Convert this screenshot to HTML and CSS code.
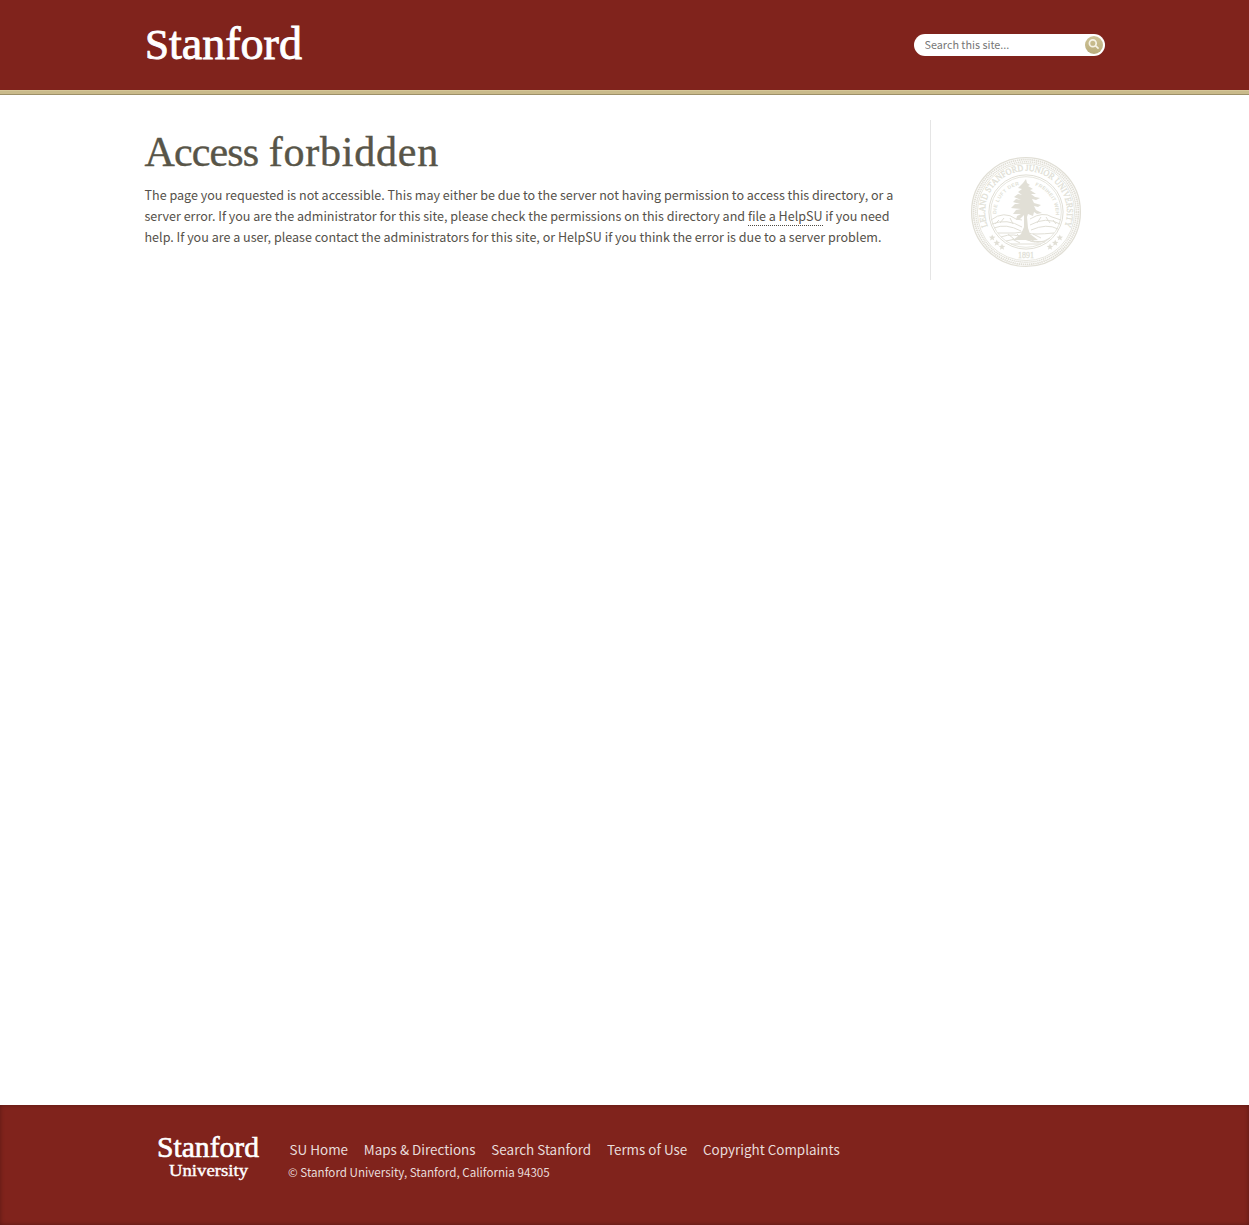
FILE: index.html
```html
<!DOCTYPE html>
<html lang="en">
<head>
<meta charset="utf-8">
<title>Access forbidden</title>
<link rel="stylesheet" href="styles.css">
</head>
<body>
<header class="header">
  <div class="container header-row">
    <svg class="logo" width="160" height="60" viewBox="0 0 160 60" role="img" aria-label="Stanford"><text x="0" y="49" textLength="157" lengthAdjust="spacingAndGlyphs"><tspan class="cap">S</tspan>tanford</text></svg>
    <form class="search">
      <input type="text" placeholder="Search this site..." aria-label="Search this site">
      <button type="button" aria-label="Search"><svg width="18" height="18" viewBox="0 0 18 18"><circle cx="7.8" cy="7.2" r="3.4"/><path d="M10.4 9.7 13.6 12.6"/></svg></button>
    </form>
  </div>
</header>
<main class="container main">
  <section class="content">
    <h1><span class="tight">Access</span> <span class="loose">forbidden</span></h1>
    <p>The page you requested is not accessible. This may either be due to the server not having permission to access this directory, or a<br>server error. If you are the administrator for this site, please check the permissions on this directory and <a href="#">file a HelpSU</a> if you need<br>help. If you are a user, please contact the administrators for this site, or HelpSU if you think the error is due to a server problem.</p>
  </section>
  <aside class="side">
    <svg class="seal" width="112" height="112" viewBox="-56 -56 112 112">
      <defs>
        <path id="outer" d="M-38.3 14.5A41 41 0 1 1 38.3 14.5"/>
        <path id="inner" d="M-29.8 2A29.8 29.8 0 1 1 29.8 2"/>
        <g id="stars"><path id="star" d="M-33.8 22.4l.9 2.2 2.4.1-1.9 1.5.7 2.3-2.1-1.3-2.1 1.3.7-2.3-1.9-1.5 2.4-.1z"/><use href="#star" x="4.6" y="5.2"/><use href="#star" x="9.8" y="9.2"/></g>
      </defs>
      <g class="rings">
        <circle r="54.4" stroke-width="1.3"/>
        <circle r="52.4" stroke-width="1.8" stroke-dasharray="1.5 .6"/>
        <circle r="50.2" stroke-width="1.4" stroke-dasharray="1.4 .6"/>
        <circle r="48.6" stroke-width=".8"/>
        <circle r="37.1" stroke-width="1"/>
        <circle r="35.3" stroke-width=".8"/>
      </g>
      <text class="seal-name"><textPath href="#outer" textLength="158" lengthAdjust="spacingAndGlyphs">LELAND STANFORD JUNIOR UNIVERSITY</textPath></text>
      <text class="seal-motto"><textPath href="#inner" textLength="40">DIE LUFT DER</textPath></text>
      <text class="seal-motto"><textPath href="#inner" startOffset="56" textLength="42">FREIHEIT WEHT</textPath></text>
      <use href="#stars"/><use href="#stars" transform="scale(-1 1)"/>
      <text class="seal-year" x="-8" y="45.8" textLength="16" lengthAdjust="spacingAndGlyphs">1891</text>
      <path class="tree" d="M0-33l1 4 3 2-2 1 5 3-3 1 6 4-5 0 4 3 5 1-4 2-4-1 2 4 7 2-3 2-4-1 2 4 6 3-5 1-3-2-1 4-5-2-1 3 1 11 2 6 8 6H-13l8-6 3-7 0-12-4 4-4 1 1-4 4-2-8 0 3-4 5-1-10-1 4-4 5 0-7-2 3-3 5 1-7-3 4-3 4 1-4-3 4-3-4-1 5-5z"/>
      <g class="land">
        <path d="M-35 8Q-22-2-10 7L-4 8M4 7Q17-1 26 5L35 8M-34 12Q-19 6-4 15M4 13Q20 4 34 12M-32 16Q-20 11-5 19M5 18Q21 11 32 17M-28 21H-11Q-3 19 2 21T28 21M-25 25Q-12 20 0 27T24 26M-20 29Q-5 25 5 29L19 30M-15 32H15"/>
        <path d="M-27 8l-4 4M-22 6l-4 5M-16 6l3 6M15 5l-4 6M20 5l4 6M27 8l3 4M-18 22l6 5M-9 22l5 5M7 22l8 4M0 24l9 6M-14 27l8 4"/>
      </g>
    </svg>
  </aside>
</main>
<footer class="footer">
  <div class="container footer-row">
    <svg class="footer-logo" width="108" height="56" viewBox="0 0 108 56" role="img" aria-label="Stanford University"><text class="f1" x="0" y="28" textLength="102" lengthAdjust="spacingAndGlyphs">Stanford</text><text class="f2" x="12" y="47" textLength="79" lengthAdjust="spacingAndGlyphs">University</text></svg>
    <div class="footer-text">
      <nav><a href="#">SU Home</a><a href="#">Maps &amp; Directions</a><a href="#">Search Stanford</a><a href="#">Terms of Use</a><a href="#">Copyright Complaints</a></nav>
      <small>© Stanford University, Stanford, California 94305</small>
    </div>
  </div>
</footer>
</body>
</html>
```
FILE: styles.css
```css
* { box-sizing: border-box; }
body { margin: 0; min-height: 1225px; display: flex; flex-direction: column; background: #fff; color: #55514a; font-family: "Noto Sans CJK SC", "Noto Sans", sans-serif; font-size: 12.55px; }
.container { width: 960px; margin: 0 auto; }
.header { height: 95px; background: linear-gradient(#80231c 90px, #d5c698 90px, #d5c698 91px, #c9ba8b 91px, #c9ba8b 94px, #9c9068 94px); }
.header-row { display: flex; justify-content: space-between; height: 90px; }
.logo { margin-top: 10px; }
.logo text { font: 46px "Liberation Serif", serif; fill: #fff; stroke: #fff; stroke-width: .9; }
.logo .cap { font-size: 43px; }
.search { display: flex; align-items: center; width: 191px; height: 22px; margin-top: 34px; padding: 0 2px 0 11px; border-radius: 11px; background: #fff; }
.search input { flex: 1; min-width: 0; height: 20px; padding: 0 0 2px; border: 0; outline: 0; background: none; font: 10.8px "Noto Sans CJK SC", sans-serif; color: #777; }
.search input::placeholder { color: #777; opacity: 1; }
.search button { width: 18px; height: 18px; padding: 0; border: 0; background: none; }
.search svg { display: block; border-radius: 9px; background: linear-gradient(#cfc498, #b9ac7b); fill: none; stroke: #f6f3e6; stroke-width: 1.7; }
.main { flex: 1; display: flex; align-items: flex-start; padding-top: 25px; }
.content { width: 786px; height: 160px; padding-top: 8px; border-right: 1px solid #e5e5e5; }
h1 { margin: 0; font: 400 42px/48px "Liberation Serif", serif; color: #585548; white-space: nowrap; -webkit-text-stroke: .4px #585548; }
.tight { letter-spacing: -.85px; }
.loose { letter-spacing: .75px; }
p { margin: 8px 0 0; line-height: 21px; white-space: nowrap; }
p a { color: inherit; text-decoration: none; border-bottom: 1px dotted #4d4942; }
.side { flex: 1; padding: 36px 0 0 39px; }
.seal { display: block; fill: #e1dfd6; }
.rings, .land { fill: none; stroke: #e1dfd6; }
.land { stroke-width: 1; }
.seal-name, .seal-year { font: 9px "Liberation Serif", serif; stroke: #e1dfd6; stroke-width: .3; }
.seal-motto { font: 700 5px "Liberation Sans", sans-serif; }
.footer { height: 120px; background: #80231c; box-shadow: inset 0 0 5px rgba(0,0,0,.3); }
.footer-row { display: flex; }
.footer-logo { margin: 24px 0 0 12px; fill: #fff; stroke: #fff; stroke-width: .6; }
.f1 { font: 29px "Liberation Serif", serif; }
.f2 { font: 17px "Liberation Serif", serif; stroke-width: .4; }
.footer-text { margin: 34px 0 0 24px; color: #e8dcda; }
nav { display: flex; gap: 15.75px; padding-left: 1px; line-height: 21px; font-size: 13.45px; white-space: nowrap; }
nav a { color: inherit; text-decoration: none; }
small { display: block; margin-left: -.5px; padding-top: 1px; font-size: 11.65px; line-height: 21px; }
```
